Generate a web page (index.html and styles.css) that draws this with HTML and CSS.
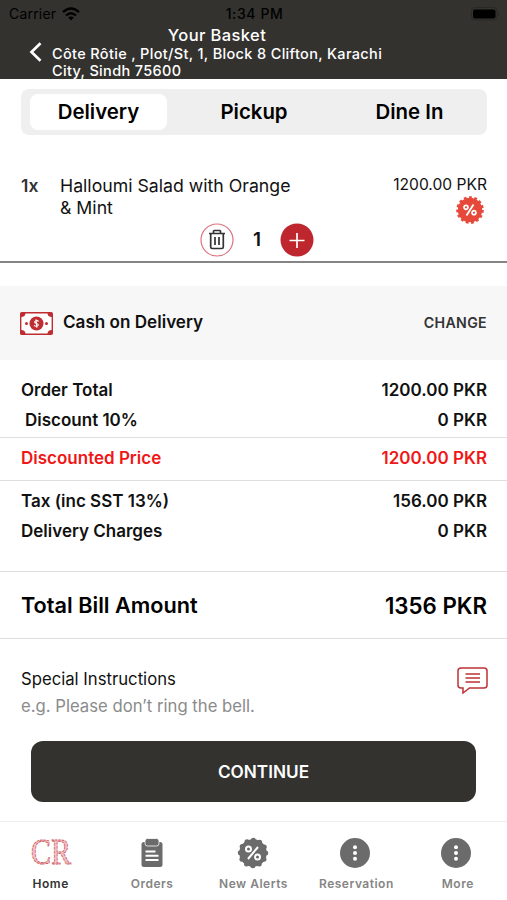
FILE: index.html
```html
<!DOCTYPE html>
<html lang="en">
<head>
<meta charset="utf-8">
<meta name="viewport" content="width=device-width, initial-scale=1">
<title>Your Basket</title>
<link rel="stylesheet" href="styles.css">
</head>
<body>
<header class="header">
  <div class="status">
    <span class="carrier"><span class="carrier-name">Carrier</span>
      <svg class="wifi" width="18" height="14" viewBox="0 0 18 14" fill="none" stroke="#000" stroke-width="2.3"><path d="M1 5.200Q9-2.200 17 5.200M4 8.500q5-4.600 10 0"/><path d="M6.200 10.600q2.800-2.400 5.600 0L9 13.600z" fill="#000" stroke="none"/></svg>
    </span>
    <span class="time">1:34 PM</span>
    <svg class="battery" width="29" height="14" viewBox="0 0 29 14"><rect x=".5" y=".5" width="25.500" height="12.500" rx="3.500" fill="none" stroke="#292826"/><rect x="2" y="2.500" width="22.500" height="9" rx="2" fill="#000"/><path d="M27.500 5q1.500 2 0 4z" fill="#222120"/></svg>
  </div>
  <h1 class="title">Your Basket</h1>
  <div class="place">
    <svg class="back" width="14" height="20" viewBox="0 0 14 20" fill="none" stroke="#fff" stroke-width="2.700"><path d="M11.500 1.200 2.500 10l9 8.800"/></svg>
    <p class="address"><span>Côte Rôtie , Plot/St, 1, Block 8 Clifton, Karachi</span><br><span class="address-end">City, Sindh 75600</span></p>
  </div>
</header>

<nav class="segments">
  <span class="segment active"><span>Delivery</span></span>
  <span class="segment"><span>Pickup</span></span>
  <span class="segment"><span>Dine In</span></span>
</nav>

<section class="item">
  <div class="item-row">
    <span class="qty">1x</span>
    <p class="name">Halloumi Salad with Orange<br>&amp; Mint</p>
    <div class="item-price">
      <span class="price">1200.00 PKR</span>
      <svg class="promo" width="28" height="28" viewBox="-14 -14 28 28"><circle r="12.200" fill="#e6493a"/><circle r="12.200" fill="none" stroke="#e6493a" stroke-width="3.200" stroke-dasharray="2.700 2.410"/><g fill="none" stroke="#fff" stroke-width="1.800"><path d="M3.500-5.500-3.500 5.500"/><circle cx="-4" cy="-2.700" r="2"/><circle cx="4" cy="2.700" r="2"/></g></svg>
    </div>
  </div>
  <div class="stepper">
    <svg width="34" height="34" viewBox="0 0 34 34" fill="none"><circle cx="17" cy="17" r="16" stroke="#dc737c" stroke-width="1.200"/><g stroke="#333" stroke-width="1.700"><path d="M9 10.500h16M13.500 10V8.200q0-.7.700-.7h5.600q.7 0 .7.700V10M10.700 11v13q0 1.500 1.500 1.500h9.600q1.500 0 1.500-1.500V11M15 14v8M19 14v8"/></g></svg>
    <span class="count">1</span>
    <svg width="34" height="34" viewBox="0 0 34 34"><circle cx="17" cy="17" r="16.500" fill="#bd272d"/><path d="M9.500 17.500h15M17 10v15" stroke="#fff" stroke-width="1.700"/></svg>
  </div>
</section>

<section class="payment">
  <svg width="33" height="23" viewBox="0 0 33 23"><rect x=".7" y=".7" width="31.600" height="21.600" rx="1" fill="#fff" stroke="#bd2d32" stroke-width="1.400"/><path d="M1 1h4.500q0 4-4.500 4zM32 1h-4.500q0 4 4.500 4zM1 22h4.500q0-4-4.500-4zM32 22h-4.500q0-4 4.500-4z" fill="#bd2d32"/><circle cx="16.500" cy="11.500" r="7" fill="#bd2d32"/><circle cx="6.500" cy="11.500" r="1.500" fill="#bd2d32"/><circle cx="26.500" cy="11.500" r="1.500" fill="#bd2d32"/><path d="M18.700 9.500q-1-1.200-2.700-.8c-2 .5-1.700 2.300.5 2.800s2.400 2.300.3 2.700q-1.600.3-2.800-.9M16 7.200l.9 8.600" fill="none" stroke="#fff" stroke-width="1.100"/></svg>
  <span class="method">Cash on Delivery</span>
  <span class="change">CHANGE</span>
</section>

<section class="bill">
  <div class="row r-order"><span>Order Total</span><span>1200.00 PKR</span></div>
  <div class="row r-discount"><span class="indent">Discount 10%</span><span>0 PKR</span></div>
  <div class="row r-net"><span>Discounted Price</span><span>1200.00 PKR</span></div>
  <div class="row r-tax"><span>Tax (inc SST 13%)</span><span>156.00 PKR</span></div>
  <div class="row r-delivery"><span>Delivery Charges</span><span>0 PKR</span></div>
  <div class="row r-total"><span class="total-label">Total Bill Amount</span><span>1356 PKR</span></div>
</section>

<section class="notes">
  <div>
    <div class="notes-title">Special Instructions</div>
    <div class="hint">e.g. Please don’t ring the bell.</div>
  </div>
  <svg width="31" height="28" viewBox="0 0 31 28" fill="none" stroke="#bd3237" stroke-width="1.500"><path d="M4 1h23q3 0 3 3v14q0 3-3 3H12.500L6 26v-5H4q-3 0-3-3V4q0-3 3-3z"/><path d="M8.500 7H23M8.500 11H23M8.500 15H23"/></svg>
</section>

<button class="continue" type="button"><span>CONTINUE</span></button>

<nav class="tabs">
  <a class="tab current">
    <svg class="brand" width="52" height="48" viewBox="0 0 52 48"><text class="logo" x="6" y="35" textLength="40" lengthAdjust="spacingAndGlyphs">CR</text></svg>
    <span>Home</span></a>
  <a class="tab">
    <svg width="32" height="32" viewBox="0 0 32 32"><path d="M8 5h16q2.500 0 2.500 2.500v20q0 2.500-2.500 2.500H8q-2.500 0-2.500-2.500v-20Q5.500 5 8 5z" fill="#6b6b6b"/><rect x="9" y="1.500" width="14" height="7.500" rx="2.500" fill="#6b6b6b" stroke="#fff" stroke-width=".8"/><path d="M9.500 14.500h10M9.500 18.700h13M9.500 23h13" stroke="#fff" stroke-width="2"/></svg>
    <span>Orders</span></a>
  <a class="tab">
    <svg width="32" height="32" viewBox="-16 -16 32 32"><circle r="13.700" fill="#6b6b6b"/><circle r="12.700" fill="none" stroke="#6b6b6b" stroke-width="5" stroke-linecap="round" stroke-dasharray="0 6.650"/><g fill="none" stroke="#fff" stroke-width="2"><path d="M5-6-5 6"/><circle cx="-4.500" cy="-4" r="2.500"/><circle cx="4.500" cy="4" r="2.500"/></g></svg>
    <span>New Alerts</span></a>
  <a class="tab">
    <svg width="32" height="32" viewBox="-16 -16 32 32"><circle r="15" fill="#6b6b6b"/><g fill="#fff"><circle cy="-5.700" r="2"/><circle r="2"/><circle cy="5.700" r="2"/></g></svg>
    <span class="wide">Reservation</span></a>
  <a class="tab">
    <svg width="32" height="32" viewBox="-16 -16 32 32"><circle r="15" fill="#6b6b6b"/><g fill="#fff"><circle cy="-5.700" r="2"/><circle r="2"/><circle cy="5.700" r="2"/></g></svg>
    <span class="wide">More</span></a>
</nav>
</body>
</html>
```

FILE: styles.css
```css
* { box-sizing: border-box; margin: 0; padding: 0; }
body { width: 507px; height: 900px; overflow: hidden; display: flex; flex-direction: column; background: #fff; color: #111; font-family: Inter, "Liberation Sans", sans-serif; white-space: nowrap; }
svg { display: block; flex: none; }

.header { height: 79px; flex: none; background: #33322f; color: #fff; }
.status { display: grid; grid-template-columns: 1fr auto 1fr; align-items: center; height: 27px; padding: 0 7px 0 9px; color: #000; font-size: 14px; line-height: 27px; }
.carrier { display: flex; align-items: center; gap: 6px; letter-spacing: .2px; }
.time { font-weight: 500; letter-spacing: .6px; }
.battery { justify-self: end; }
.title { height: 17px; line-height: 17px; font-size: 16.5px; font-weight: 500; letter-spacing: .4px; text-align: center; margin-right: 73px; }
.place { display: flex; align-items: flex-start; padding-left: 29px; gap: 9px; }
.back { margin-top: -2px; }
.address { font-size: 14.5px; font-weight: 500; line-height: 17px; margin-top: 1px; letter-spacing: .34px; }

.segments { display: flex; flex: none; height: 46px; margin: 10px 20px 0 21px; padding: 5px 9px; border-radius: 8px; background: #efefef; justify-content: space-between; }
.segment { width: 137px; border-radius: 8px; font-size: 20.4px; font-weight: 600; line-height: 36px; text-align: center; color: #000; }
.active { background: #fff; }

.item { height: 128px; flex: none; border-bottom: 2px solid #858585; padding: 40px 20px 0 21px; }
.item-row { display: flex; height: 46px; }
.qty { width: 39px; font-size: 17.5px; font-weight: 600; line-height: 22px; color: #333; }
.name { flex: 1; font-size: 17.7px; line-height: 22px; }
.item-price { display: flex; flex-direction: column; align-items: flex-end; }
.price { font-size: 15.6px; line-height: 20px; }
.promo { margin: 1px 3px 0 0; }
.stepper { display: flex; align-items: center; gap: 17px; margin-left: 179px; height: 37px; }
.count { font-size: 19px; font-weight: 600; width: 12px; text-align: center; }

.payment { height: 74px; margin-top: 23px; flex: none; background: #f7f7f7; display: flex; align-items: center; padding: 0 20px; }
.method { margin: -3px 0 0 10px; font-size: 17.1px; font-weight: 600; }
.change { margin: -2px 0 0 auto; font-size: 14.2px; letter-spacing: .3px; font-weight: 600; color: #333; }

.bill { flex: none; font-size: 17px; font-weight: 600; padding-top: 15px; }
.row { display: flex; justify-content: space-between; align-items: center; padding: 0 20px 0 21px; height: 30px; }
.indent { margin-left: 4px; }
.r-discount { height: 33px; padding-bottom: 2px; border-bottom: 1px solid #dedede; }
.r-net { height: 43px; padding-bottom: 2px; border-bottom: 1px solid #dedede; color: #ef1717; }
.r-tax { height: 35px; padding-top: 5px; }
.r-delivery { height: 56px; padding-bottom: 25px; border-bottom: 1px solid #dedede; }
.r-total { height: 67px; border-bottom: 1px solid #dedede; font-size: 22.3px; color: #000; }
.total-label { font-size: 21.7px; }

.notes { display: flex; justify-content: space-between; flex: none; height: 102px; padding: 26px 19px 0 21px; }
.notes-title { font-size: 16.7px; line-height: 28px; }
.hint { font-size: 16.7px; line-height: 27px; color: #8b8b8b; }
.notes svg { margin-top: 2px; }
.continue { height: 61px; flex: none; margin: 0 31px; padding-left: 20px; border: 0; border-radius: 12px; background: #33322f; color: #fff; font: 600 17.2px Inter, sans-serif; }

.tabs { display: grid; grid-template-columns: repeat(5, 1fr); flex: none; height: 79px; margin-top: 19px; border-top: 1px solid #ededed; padding-top: 15px; }
.tab { display: flex; flex-direction: column; align-items: center; font-size: 12px; font-weight: 600; letter-spacing: .5px; line-height: 29px; color: #858585; }
.wide { margin-left: 3px; }
.current { color: #333; }
.brand { margin: -8px 0; }
.logo { font: 36px "Liberation Serif", serif; letter-spacing: 0; fill: #efc1c6; stroke: #cf5860; stroke-width: .9; stroke-dasharray: 3 1; }
```
